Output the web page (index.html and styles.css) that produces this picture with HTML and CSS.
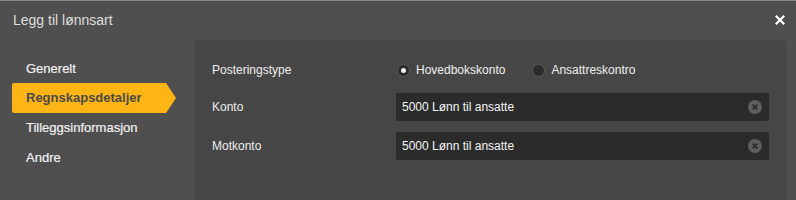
FILE: index.html
```html
<!DOCTYPE html>
<html lang="no">
<head>
    <meta charset="UTF-8">
    <title>Legg til lønnsart</title>
    <link rel="stylesheet" href="styles.css">
</head>
<body>
    <div class="dialog">
        <div class="header">
            <span class="title">Legg til lønnsart</span>
            <svg class="close" width="10" height="10" viewBox="0 0 10 10">
                <path d="M1.5 1.5 L8.5 8.5 M8.5 1.5 L1.5 8.5" stroke="#fff" stroke-width="2.2" stroke-linecap="square"/>
            </svg>
        </div>
        <div class="main">
            <ul class="nav">
                <li>Generelt</li>
                <li class="active">Regnskapsdetaljer</li>
                <li>Tilleggsinformasjon</li>
                <li>Andre</li>
            </ul>
            <div class="panel">
                <div class="row first">
                    <div class="label">Posteringstype</div>
                    <div class="radios">
                        <label class="radio"><span class="dot checked"></span>Hovedbokskonto</label>
                        <label class="radio"><span class="dot"></span>Ansattreskontro</label>
                    </div>
                </div>
                <div class="row">
                    <div class="label">Konto</div>
                    <div class="field">
                        <span>5000 Lønn til ansatte</span>
                        <svg class="clear" width="14" height="14" viewBox="0 0 14 14">
                            <circle cx="7" cy="7" r="7" fill="#5e5e5e"/>
                            <path d="M4.6 4.6 L9.4 9.4 M9.4 4.6 L4.6 9.4" stroke="#2b2b2b" stroke-width="1.6"/>
                        </svg>
                    </div>
                </div>
                <div class="row">
                    <div class="label">Motkonto</div>
                    <div class="field">
                        <span>5000 Lønn til ansatte</span>
                        <svg class="clear" width="14" height="14" viewBox="0 0 14 14">
                            <circle cx="7" cy="7" r="7" fill="#5e5e5e"/>
                            <path d="M4.6 4.6 L9.4 9.4 M9.4 4.6 L4.6 9.4" stroke="#2b2b2b" stroke-width="1.6"/>
                        </svg>
                    </div>
                </div>
            </div>
        </div>
    </div>
</body>
</html>
```

FILE: styles.css
```css
body {
    margin: 0;
    background: #4f4f4f;
    font-family: 'Liberation Sans', Arial, sans-serif;
}
.dialog {
    height: 200px;
    background: #4f4f4f;
    border-top: 1px solid #8a8a8a;
    box-sizing: border-box;
    display: flex;
    flex-direction: column;
}
.header {
    height: 40px;
    display: flex;
    align-items: center;
    justify-content: space-between;
    padding: 0 11px 0 13px;
    margin-top: -1px;
}
.title {
    color: #dedede;
    font-size: 14px;
}
.close {
    display: block;
}
.main {
    flex: 1;
    display: flex;
}
.nav {
    list-style: none;
    margin: 0;
    padding: 14px 0 0 12px;
    width: 182px;
}
.nav li {
    height: 30px;
    line-height: 30px;
    padding-left: 14px;
    color: #f2f2f2;
    font-size: 13px;
    -webkit-text-stroke: 0.2px #f2f2f2;
    width: 150px;
}
.nav li.active {
    background: #fdb515;
    color: #4a4a4a;
    font-weight: bold;
    -webkit-text-stroke: 0;
    border-radius: 2px 0 0 2px;
    clip-path: polygon(0 0, calc(100% - 10px) 0, 100% 50%, calc(100% - 10px) 100%, 0 100%);
    line-height: 29px;
    margin-top: -1px;
}
.panel {
    flex: 1;
    background: #464646;
    margin-right: 10px;
    border-radius: 0 3px 0 0;
    padding: 16px 17px 0 18px;
}
.row {
    display: flex;
    align-items: center;
    height: 28px;
    margin-bottom: 11px;
}
.row.first {
    margin-bottom: 9px;
}
.label {
    width: 184px;
    color: #eeeeee;
    font-size: 12px;
}
.radios {
    display: flex;
    align-items: center;
    gap: 26px;
}
.radio {
    display: flex;
    align-items: center;
    color: #f0f0f0;
    font-size: 12px;
}
.dot {
    width: 11px;
    height: 11px;
    border-radius: 50%;
    background: #2b2b2b;
    border: 1px solid #5a5a5a;
    margin: 0 6px 0 1px;
    position: relative;
}
.dot.checked::after {
    content: "";
    position: absolute;
    left: 3px;
    top: 3px;
    width: 5px;
    height: 5px;
    border-radius: 50%;
    background: #f0f0f0;
}
.field {
    flex: 1;
    height: 28px;
    background: #2b2b2b;
    border-radius: 2px;
    display: flex;
    align-items: center;
    justify-content: space-between;
    padding: 0 7px 0 6px;
    color: #f5f5f5;
    font-size: 12px;
}
.clear {
    display: block;
}
```
